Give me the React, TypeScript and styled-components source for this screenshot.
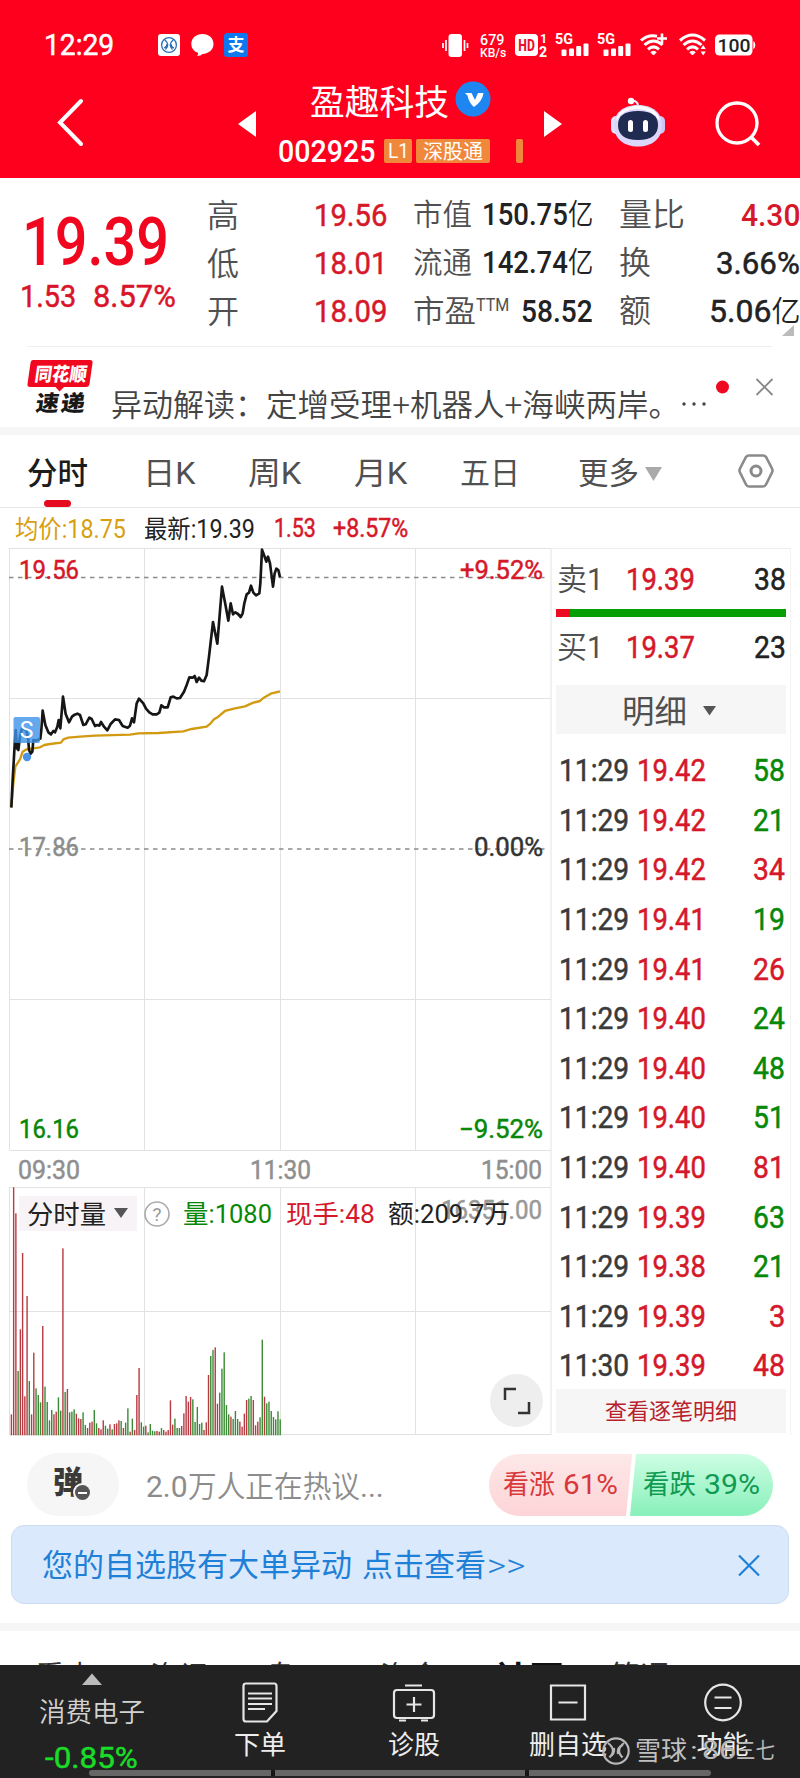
import React, { useLayoutEffect, useRef, useState } from "react";
import styled, { createGlobalStyle } from "styled-components";

const RED = "#d5182a";
const GREEN = "#088808";
const FONT = `Roboto, "Noto Sans CJK SC", sans-serif`;

const GlobalStyle = createGlobalStyle`
  * { box-sizing: border-box; }
  body { margin: 0; background: #fff; font-family: ${FONT}; }
`;

/* ---------- text that is condensed or widened to a given width ---------- */

/* Weight 450 is a regular face thickened by a hairline stroke. */
const FitBox = styled.span<{ $w: number; $size: number; $color: string; $weight: number; $ml: number; $lift: number }>`
  display: inline-block;
  flex: none;
  width: ${(p) => p.$w}px;
  height: ${(p) => Math.round(p.$size * 1.2)}px;
  line-height: ${(p) => Math.round(p.$size * 1.2)}px;
  margin-left: ${(p) => p.$ml}px;
  margin-bottom: ${(p) => p.$lift}px;
  font-size: ${(p) => p.$size}px;
  font-weight: ${(p) => (p.$weight === 450 ? 400 : p.$weight)};
  -webkit-text-stroke: ${(p) => (p.$weight === 450 ? 0.5 : 0)}px ${(p) => p.$color};
  color: ${(p) => p.$color};
`;
const FitInner = styled.span`
  display: inline-block;
  white-space: nowrap;
  transform-origin: 0 50%;
`;

type FitProps = {
  w: number;
  size: number;
  color?: string;
  weight?: number;
  ml?: number;
  lift?: number;
  children: React.ReactNode;
};
function Fit({ w, size, color = "#222", weight = 400, ml = 0, lift = 0, children }: FitProps) {
  const ref = useRef<HTMLSpanElement>(null);
  const [scale, setScale] = useState(1);
  useLayoutEffect(() => {
    if (ref.current) setScale(w / ref.current.offsetWidth);
  }, [w, size, children]);
  return (
    <FitBox $w={w} $size={size} $color={color} $weight={weight} $ml={ml} $lift={lift}>
      <FitInner ref={ref} style={{ transform: `scaleX(${scale})` }}>
        {children}
      </FitInner>
    </FitBox>
  );
}

const Icon = styled.svg<{ $ml?: number }>`
  display: block;
  flex: none;
  margin-left: ${(p) => p.$ml ?? 0}px;
  overflow: visible;
`;

/* ---------- page ---------- */

const Page = styled.main`
  width: 800px;
  height: 1778px;
  overflow: hidden;
  background: #fff;
  display: flex;
  flex-direction: column;
`;
const Header = styled.header`
  flex: none;
  height: 178px;
  background: #fe001e;
`;
const StatusBar = styled.div`
  height: 70px;
  padding: 20px 0 0 44px;
  display: flex;
  align-items: center;
`;
const StatusSpacer = styled.div`
  width: 194px;
`;
const SpeedStack = styled.div`
  margin-left: 11px;
  width: 26px;
  height: 28px;
  display: flex;
  flex-direction: column;
  justify-content: center;
`;
const TitleBar = styled.div`
  height: 108px;
  display: flex;
`;
const NavSlot = styled.div<{ $w: number; $top: number; $left: number }>`
  flex: none;
  width: ${(p) => p.$w}px;
  padding: ${(p) => p.$top}px 0 0 ${(p) => p.$left}px;
`;
const TitleBlock = styled.div`
  width: 268px;
  display: flex;
  flex-direction: column;
`;
const TitleRow = styled.div<{ $h: number; $pl: number }>`
  height: ${(p) => p.$h}px;
  padding-left: ${(p) => p.$pl}px;
  display: flex;
  align-items: center;
`;
const Tag = styled.span<{ $w: number; $ml: number }>`
  width: ${(p) => p.$w}px;
  height: 24px;
  margin-left: ${(p) => p.$ml}px;
  background: #f0883c;
  border-radius: 2px;
  display: flex;
  align-items: center;
  justify-content: center;
`;

/* ---------- quote summary ---------- */

const Quotes = styled.section`
  position: relative;
  flex: none;
  height: 169px;
  display: flex;
  &::after {
    content: "";
    position: absolute;
    left: 27px;
    right: 28px;
    bottom: 0;
    height: 1px;
    background: #eeeeee;
  }
`;
const PriceBlock = styled.div`
  width: 207px;
  padding: 24px 0 0 20px;
  display: flex;
  flex-direction: column;
`;
const ChangeRow = styled.div`
  display: flex;
  margin-top: -5px;
`;
const QuoteColumns = styled.div`
  flex: 1;
  padding: 13px 0 0 0;
  display: flex;
  gap: 26px;
`;
const QuoteColumn = styled.div`
  width: 180px;
  &:last-child { width: 181px; }
`;
const QuoteRow = styled.div`
  height: 48px;
  display: flex;
  align-items: center;
  justify-content: space-between;
`;
const QuoteLabel = styled.span`
  display: flex;
`;
const ExpandCorner = styled.div`
  position: absolute;
  right: 6px;
  bottom: 11px;
  border-left: 12px solid transparent;
  border-bottom: 11px solid #bbb;
`;
const Unit = styled.span`
  font-weight: 350;
  font-size: 29px;
  -webkit-text-stroke: 0;
`;

const News = styled.section`
  flex: none;
  height: 80px;
  padding-left: 27px;
  display: flex;
`;
const NewsText = styled.div`
  padding: 40px 0 0 16px;
  display: flex;
`;
const Band = styled.div`
  flex: none;
  height: 8px;
  background: #f6f6f7;
`;

/* ---------- chart tabs ---------- */

const ChartTabs = styled.nav`
  flex: none;
  height: 73px;
  padding-left: 27px;
  border-bottom: 1px solid #e6e6e6;
  display: flex;
`;
const ChartTab = styled.div<{ $w: number; $pt?: number }>`
  width: ${(p) => p.$w}px;
  padding-top: ${(p) => p.$pt ?? 20}px;
  display: flex;
  flex-direction: column;
`;
const ActiveMark = styled.div`
  width: 27px;
  height: 7px;
  margin: 8px 0 0 17px;
  border-radius: 4px;
  background: #e60a20;
`;
const MoreRow = styled.div`
  display: flex;
  align-items: center;
`;

/* ---------- chart and order book ---------- */

const Market = styled.section`
  flex: none;
  height: 927px;
  display: flex;
`;
const ChartColumn = styled.div`
  position: relative;
  width: 552px;
`;
const Legend = styled.div`
  height: 40px;
  padding: 4px 0 0 15px;
  display: flex;
  align-items: center;
`;
const VolumeLegend = styled.div`
  position: absolute;
  left: 19px;
  top: 688px;
  height: 35px;
  display: flex;
  align-items: center;
`;
const VolumeSelect = styled.div`
  width: 118px;
  height: 35px;
  padding-left: 8px;
  background: #f7f3f6;
  display: flex;
  align-items: center;
`;
const FullscreenButton = styled.div`
  position: absolute;
  left: 490px;
  top: 866px;
  width: 53px;
  height: 53px;
  border-radius: 50%;
  background: #eeeeee;
  display: flex;
  align-items: center;
  justify-content: center;
`;
const Book = styled.div`
  width: 239px;
  margin-top: 40px;
  padding: 0 4px 0 4px;
  border-top: 1px solid #ececec;
  border-right: 1px solid #f3f3f3;
`;
const BestRow = styled.div<{ $h: number; $pt: number }>`
  height: ${(p) => p.$h}px;
  padding: ${(p) => p.$pt}px 0 0 1px;
  display: flex;
`;
const RatioBar = styled.div`
  width: 230px;
  height: 8px;
  background: linear-gradient(90deg, #ee0a20 0 14px, #06a006 14px);
`;
const DetailHeader = styled.div`
  width: 230px;
  height: 49px;
  padding: 2px 0 0 66px;
  background: #f6f6f6;
  display: flex;
  align-items: center;
`;
const Trades = styled.div`
  height: 655px;
  padding-top: 12px;
`;
const TradeRow = styled.div`
  width: 229px;
  height: 49.6px;
  padding-left: 3px;
  display: flex;
  align-items: center;
`;
const TradeQty = styled.div`
  flex: 1;
  display: flex;
  justify-content: flex-end;
`;
const AllTrades = styled.div`
  width: 230px;
  height: 44px;
  padding-top: 1px;
  background: #f6f6f6;
  display: flex;
  align-items: center;
  justify-content: center;
`;

/* ---------- below the chart ---------- */

const Discussion = styled.section`
  flex: none;
  height: 90px;
  padding: 18px 0 0 27px;
  display: flex;
`;
const BulletPill = styled.div`
  position: relative;
  width: 92px;
  height: 63px;
  border-radius: 32px;
  background: #f6f6f6;
  padding: 11px 0 0 26px;
`;
const MinusBadge = styled.span`
  position: absolute;
  left: 48px;
  top: 32px;
  width: 15px;
  height: 15px;
  border-radius: 50%;
  background: #555;
  box-shadow: 0 0 0 2px #f6f6f6;
  &::after {
    content: "";
    position: absolute;
    left: 3px;
    top: 6.5px;
    width: 9px;
    height: 2px;
    background: #fff;
  }
`;
const Hint = styled.div`
  width: 370px;
  padding: 16px 0 0 27px;
  display: flex;
`;
const VotePill = styled.div`
  display: flex;
  width: 284px;
  height: 62px;
  margin-top: 1px;
  border-radius: 31px;
  overflow: hidden;
`;
const VoteHalf = styled.div<{ $up?: boolean }>`
  flex: none;
  width: 144px;
  margin-right: ${(p) => (p.$up ? -4 : 0)}px;
  padding-left: 14px;
  display: flex;
  align-items: center;
  background: ${(p) => (p.$up ? "linear-gradient(#fee8e8, #fdd4d7)" : "linear-gradient(#cdfde3, #88f0ba)")};
  clip-path: ${(p) =>
    p.$up ? "polygon(0 0, 143px 0, 137px 100%, 0 100%)" : "polygon(7px 0, 100% 0, 100% 100%, 1px 100%)"};
`;
const Banner = styled.section`
  flex: none;
  width: 778px;
  height: 79px;
  margin: 0 0 19px 11px;
  padding: 2px 0 0 30px;
  border: 1px solid #cbdcf2;
  border-radius: 13px;
  background: #dbe9fc;
  display: flex;
  align-items: center;
`;
const SectionTabs = styled.nav`
  flex: none;
  height: 34px;
  overflow: hidden;
  padding: 28px 0 0 35px;
  display: flex;
`;

/* ---------- bottom bar ---------- */

const BottomBar = styled.footer`
  position: relative;
  flex: none;
  height: 113px;
  background: #222222;
  display: grid;
  grid-template-columns: 183px 154px 154px 154px 155px;
`;
const BottomItem = styled.div`
  display: flex;
  flex-direction: column;
  align-items: center;
`;
const BottomIcon = styled.div`
  height: 65px;
  padding-top: 17px;
`;
const SectorChange = styled.div`
  margin-top: 12px;
`;
const HomeIndicator = styled.div`
  position: absolute;
  left: 89px;
  top: 105px;
  width: 622px;
  height: 6px;
  border-radius: 3px;
  background: #666;
  &::before,
  &::after {
    content: "";
    position: absolute;
    top: 0;
    width: 4px;
    height: 6px;
    background: #161616;
  }
  &::before { left: 182px; }
  &::after { left: 436px; }
`;
const Watermark = styled.div`
  position: absolute;
  left: 602px;
  top: 71px;
  height: 30px;
  display: flex;
  align-items: center;
`;

/* ---------- data ---------- */

/* Chart points are stored in thirds of a pixel, counted from y = 420. */
const PRICE =
  "34,1163 38,1080 44,975 47,930 51,985 55,990 60,950 66,925 78,930 84,950 87,990 92,1001 97,995 100,960 108,962 121,956 124,930 128,872 136,915 145,937 153,943 160,933 165,937 172,920 176,900 181,925 189,830 197,882 207,907 216,890 224,884 232,881 240,885 250,915 257,913 268,893 275,897 285,918 292,915 298,917 303,906 312,920 322,931 332,912 345,898 357,900 368,918 383,923 390,917 396,895 402,907 410,850 417,836 430,850 438,866 448,877 458,883 470,883 478,878 484,856 492,862 503,862 512,832 520,830 530,835 540,834 552,815 560,795 568,772 578,773 584,768 590,786 597,773 604,782 612,784 620,765 627,710 639,606 652,671 666,500 676,553 685,602 692,550 699,583 706,577 714,582 722,591 728,580 733,550 740,523 747,518 753,497 760,518 768,526 778,520 781,490 786,389 792,405 799,425 804,410 810,430 819,500 824,460 829,446 835,450 840,472";
const AVERAGE =
  "34,1160 40,1090 46,1040 60,1018 68,995 80,988 100,985 120,982 133,975 150,972 183,968 190,958 205,953 240,950 285,947 390,944 415,940 475,939 550,934 575,927 620,920 632,910 642,898 655,890 675,873 705,865 735,859 760,848 780,843 790,834 815,820 840,814";
const VOLUME_TOPS = [
  943, 262, 340, 813, 688, 459, 889, 588, 843, 943, 758, 865, 885, 907, 678, 860, 906, 961, 930, 943, 935, 892, 932,
  445, 876, 867, 937, 935, 928, 941, 955, 957, 937, 975, 984, 968, 965, 930, 970, 984, 988, 961, 977, 986, 973, 988,
  972, 970, 961, 963, 984, 968, 925, 995, 956, 990, 885, 804, 967, 980, 977, 997, 972, 992, 994, 993, 995, 984, 990,
  995, 990, 901, 974, 956, 984, 984, 978, 940, 888, 905, 891, 898, 966, 921, 972, 968, 990, 967, 825, 768, 750, 742,
  911, 878, 806, 757, 915, 943, 950, 957, 933, 957, 965, 980, 941, 900, 896, 888, 900, 976, 965, 952, 719, 890, 910,
  905, 933, 951, 958, 934, 958,
];
/* One letter a minute: r for a rise, g for a fall. */
const VOLUME_SIDES =
  "rrrgrrrrgrrggg" + "rggggrrggrgrgggrrrg" + "grrrggrrrggrgrrrgrg" + "grgrrrggrg" +
  "gggrrgrrrrrgggrrrrrggggg" + "rrrggrrggggg" + "rgggrrrrggrrrggrggggg";

const TRADES: [string, string, string, boolean][] = [
  ["11:29", "19.42", "58", false],
  ["11:29", "19.42", "21", false],
  ["11:29", "19.42", "34", true],
  ["11:29", "19.41", "19", false],
  ["11:29", "19.41", "26", true],
  ["11:29", "19.40", "24", false],
  ["11:29", "19.40", "48", false],
  ["11:29", "19.40", "51", false],
  ["11:29", "19.40", "81", true],
  ["11:29", "19.39", "63", false],
  ["11:29", "19.38", "21", false],
  ["11:29", "19.39", "3", true],
  ["11:30", "19.39", "48", true],
];

/* ---------- parts ---------- */

function Signal({ ml }: { ml: number }) {
  return (
    <Icon $ml={ml} width="34" height="24" viewBox="0 0 34 24" fill="#fff">
      <text x="0" y="11" fontSize="15.5" fontWeight="700" textLength="18" lengthAdjust="spacingAndGlyphs">5G</text>
      <rect x="6.5" y="16.5" width="5" height="6.5" rx="1" />
      <rect x="14" y="15.5" width="5" height="7.5" rx="1" />
      <rect x="21.2" y="13" width="5" height="10" rx="1" />
      <rect x="28.5" y="10.5" width="5" height="12.5" rx="1" />
    </Icon>
  );
}

function Wifi({ ml, plus }: { ml: number; plus?: boolean }) {
  return (
    <Icon $ml={ml} width="27" height="24" viewBox="0 0 27 24" fill="none" stroke="#fff" strokeWidth="3">
      <path d={plus ? "M1 7.5Q8 1.2 17 3.2" : "M1 7.5Q13.5 -3.5 26 7.5"} />
      <path d="M4.5 12Q13.5 4 22.5 12" />
      <path d="M8 16.3Q13.5 11.500 19 16.300" />
      <path d="M10.800 19.200Q13.500 17.200 16.200 19.200L13.500 22Z" fill="#fff" strokeWidth="1" />
      {plus ? (
        <path d="M22 0.500v10M17 5.500h10" strokeWidth="2.600" />
      ) : (
        <path d="M24.200 12l2.600 4h-5.200zM24.200 22.500l2.600-4h-5.200z" fill="#fff" stroke="none" />
      )}
    </Icon>
  );
}

function StatusIcons() {
  return (
    <StatusBar>
      <Fit w={70} size={29} color="#fff" weight={450}>12:29</Fit>
      <Icon $ml={44} width="22" height="22" viewBox="0 0 22 22" fill="none">
        <rect width="22" height="22" rx="3" fill="#fff" />
        <circle cx="11" cy="11" r="7.4" stroke="#2b6fb5" strokeWidth="1.3" />
        <path d="M6.500 5.500q6 5.500 1 10M6 14q3-1 3-4M15.500 5.500q-6 5.500-1 10M16 14q-3-1-3-4" stroke="#2b6fb5" strokeWidth="1.3" />
      </Icon>
      <Icon $ml={11} width="23" height="22" viewBox="0 0 23 22" fill="#fff">
        <path d="M11.500 0C18 0 22.500 4.300 22.500 10S18 19.500 11.500 20Q10 22 6 22Q7.500 20.500 7 18.800Q0.300 16.500 0.300 10C0.300 4.300 5 0 11.500 0Z" />
      </Icon>
      <Icon $ml={10} width="24" height="24" viewBox="0 0 24 24">
        <rect width="24" height="24" rx="3" fill="#0f77f0" />
        <text x="12" y="18" fontSize="17" fontWeight="700" fill="#fff" textAnchor="middle">支</text>
      </Icon>
      <StatusSpacer />
      <Icon width="27" height="23" viewBox="0 0 27 23" fill="none" stroke="#fff" strokeWidth="1.7">
        <rect x="6.500" y="0" width="13.500" height="23" rx="3" fill="#fff" stroke="none" />
        <path d="M1 9v5M4 6v11M22.500 6v11M25.500 9v5" />
      </Icon>
      <SpeedStack>
        <Fit w={24} size={15.5} color="#fff" weight={500} lift={-6}>679</Fit>
        <Fit w={26} size={13.5} color="#fff" weight={500}>KB/s</Fit>
      </SpeedStack>
      <Icon $ml={9} width="32" height="24" viewBox="0 0 32 24" fill="#fff">
        <rect y="1" width="23" height="22" rx="4" />
        <text x="3.300" y="18" fontSize="16" fontWeight="800" fill="#e8102a" textLength="16.500" lengthAdjust="spacingAndGlyphs">HD</text>
        <text x="25" y="9.500" fontSize="12.500" fontWeight="700">1</text>
        <text x="24" y="23.500" fontSize="14" fontWeight="800">2</text>
      </Icon>
      <Signal ml={8} />
      <Signal ml={8} />
      <Wifi ml={9} plus />
      <Wifi ml={12} />
      <Icon $ml={9} width="41" height="22" viewBox="0 0 41 22" fill="#fff">
        <rect y="0.500" width="37.500" height="21" rx="4.500" />
        <path d="M38.300 7q2 1 2 4t-2 4z" />
        <text x="2.500" y="17.500" fontSize="19" fontWeight="500" fill="#222" textLength="33" lengthAdjust="spacingAndGlyphs">100</text>
      </Icon>
    </StatusBar>
  );
}

function Title() {
  return (
    <TitleBar>
      <NavSlot $w={238} $top={29} $left={57}>
        <Icon width="26" height="47" viewBox="0 0 26 47" fill="none" stroke="#fff" strokeWidth="4" strokeLinecap="round">
          <path d="M24 2L3 23.500L24 45" />
        </Icon>
      </NavSlot>
      <NavSlot $w={38} $top={41} $left={0}>
        <Icon width="18" height="26" viewBox="0 0 18 26" fill="#fff">
          <path d="M18 0V26L0 13Z" />
        </Icon>
      </NavSlot>
      <TitleBlock>
        <TitleRow $h={58} $pl={34}>
          <Fit w={139} size={35} color="#fff" lift={-9}>盈趣科技</Fit>
          <Icon $ml={6} width="36" height="36" viewBox="0 0 36 36">
            <circle cx="18" cy="18" r="17.500" fill="#1e86f0" />
            <path d="M10 12h6.500l3.500 7 3-7h5.500q-1 8-9.500 14-5-4-6.500-11.500z" fill="#fff" />
          </Icon>
        </TitleRow>
        <TitleRow $h={46} $pl={2}>
          <Fit w={97} size={31.5} color="#fff" weight={500} lift={-1}>002925</Fit>
          <Tag $w={28} $ml={9}>
            <Fit w={21} size={20} color="#fff">L1</Fit>
          </Tag>
          <Tag $w={74} $ml={4}>
            <Fit w={60} size={20} color="#fff" lift={-1}>深股通</Fit>
          </Tag>
          <Tag $w={7} $ml={26} />
        </TitleRow>
      </TitleBlock>
      <NavSlot $w={67} $top={41} $left={0}>
        <Icon width="18" height="26" viewBox="0 0 18 26" fill="#fff">
          <path d="M0 0V26L18 13Z" />
        </Icon>
      </NavSlot>
      <NavSlot $w={104} $top={27} $left={0}>
        <Icon width="54" height="50" viewBox="0 0 54 50">
          <path d="M27 9Q27 4 21 3.500" stroke="#f2ecff" strokeWidth="2" fill="none" />
          <circle cx="20" cy="4" r="3.200" fill="#fff" />
          <rect x="0" y="19" width="10" height="18" rx="5" fill="#e4e0fb" />
          <rect x="44" y="19" width="10" height="18" rx="5" fill="#cfc4f6" />
          <path d="M27 8C43 8 51 17 51 28C51 42 41 49.500 27 49.500S3 42 3 28C3 17 11 8 27 8Z" fill="#dcd6fa" />
          <path d="M27 9C40 9 48 16 49 24Q40 12 26 12T5 24C6 16 14 9 27 9Z" fill="#fff" />
          <path d="M27 14C41 14 47 19 47 28S41 43 27 43S7 37 7 28S13 14 27 14Z" fill="#1f2b50" />
          <rect x="17" y="23" width="5" height="12" rx="2.500" fill="#fff" />
          <rect x="32" y="23" width="5" height="12" rx="2.500" fill="#fff" />
        </Icon>
      </NavSlot>
      <NavSlot $w={85} $top={31} $left={0}>
        <Icon width="46" height="46" viewBox="0 0 46 46" fill="none" stroke="#fff" strokeWidth="3.300">
          <circle cx="22" cy="22" r="20" />
          <path d="M36.500 36.500L44 44" strokeWidth="3.800" />
        </Icon>
      </NavSlot>
    </TitleBar>
  );
}

function QuoteSummary() {
  const label = "#505050";
  return (
    <Quotes>
      <PriceBlock>
        <Fit w={147} size={67} ml={2} color="#f0061e" weight={500}>19.39</Fit>
        <ChangeRow>
          <Fit w={56} size={32} color="#d9142a" weight={450}>1.53</Fit>
          <Fit w={83} size={32} ml={17} color="#d9142a" weight={450}>8.57%</Fit>
        </ChangeRow>
      </PriceBlock>
      <QuoteColumns>
        <QuoteColumn>
          {[["高", "19.56"], ["低", "18.01"], ["开", "18.09"]].map(([k, v]) => (
            <QuoteRow key={k}>
              <Fit w={32} size={32} color={label} weight={350} lift={-1}>{k}</Fit>
              <Fit w={73} size={32} color={RED} weight={450}>{v}</Fit>
            </QuoteRow>
          ))}
        </QuoteColumn>
        <QuoteColumn>
          <QuoteRow>
            <Fit w={59} size={30} color={label} weight={350}>市值</Fit>
            <Fit w={111} size={31.5} weight={500}>150.75<Unit>亿</Unit></Fit>
          </QuoteRow>
          <QuoteRow>
            <Fit w={59} size={30} color={label} weight={350}>流通</Fit>
            <Fit w={111} size={31.5} weight={500}>142.74<Unit>亿</Unit></Fit>
          </QuoteRow>
          <QuoteRow>
            <QuoteLabel>
              <Fit w={63} size={31} color={label} weight={350}>市盈</Fit>
              <Fit w={33} size={19} color={label}>TTM</Fit>
            </QuoteLabel>
            <Fit w={72} size={32} weight={500}>58.52</Fit>
          </QuoteRow>
        </QuoteColumn>
        <QuoteColumn>
          <QuoteRow>
            <Fit w={66} size={32} color={label} weight={350}>量比</Fit>
            <Fit w={59} size={32} color={RED} weight={500}>4.30</Fit>
          </QuoteRow>
          <QuoteRow>
            <Fit w={32} size={32} color={label} weight={350}>换</Fit>
            <Fit w={84} size={32} weight={450}>3.66%</Fit>
          </QuoteRow>
          <QuoteRow>
            <Fit w={32} size={32} color={label} weight={350}>额</Fit>
            <Fit w={91} size={32} weight={450}>5.06<Unit>亿</Unit></Fit>
          </QuoteRow>
        </QuoteColumn>
      </QuoteColumns>
      <ExpandCorner />
    </Quotes>
  );
}

function NewsLine() {
  return (
    <News>
      <Icon width="68" height="80" viewBox="27 347 68 80">
        <path d="M33 360H90Q93 360 92.500 363L89.500 384Q89 387 86 387H64L59.500 391.500L55.500 387H30Q27 387 27.500 384L30.500 363Q31 360 33 360Z" fill="#f0081e" />
        <g transform="translate(34 381) skewX(-8)">
          <text fontSize="19" fontWeight="900" fill="#fff" textLength="52" lengthAdjust="spacingAndGlyphs">同花顺</text>
        </g>
        <g transform="translate(35 411) skewX(-8)" fill="#181818">
          <text fontSize="22" fontWeight="900" textLength="23" lengthAdjust="spacingAndGlyphs">速</text>
          <text x="25" fontSize="22" fontWeight="900" textLength="24" lengthAdjust="spacingAndGlyphs">递</text>
        </g>
      </Icon>
      <NewsText>
        <Fit w={155} size={31} color="#444" weight={350}>异动解读：</Fit>
        <Fit w={414} size={31} color="#444" weight={350}>定增受理+机器人+海峡两岸。</Fit>
        <Icon $ml={2} width="26" height="38" viewBox="0 0 26 38" fill="#444">
          <circle cx="2" cy="17" r="1.700" />
          <circle cx="12" cy="17" r="1.700" />
          <circle cx="22" cy="17" r="1.700" />
        </Icon>
      </NewsText>
      <Icon $ml={7} width="60" height="60" viewBox="715 347 60 60">
        <circle cx="722.500" cy="387" r="6.500" fill="#ee0a20" />
        <path d="M756.500 379L772.500 395M772.500 379L756.500 395" stroke="#888" strokeWidth="1.800" />
      </Icon>
    </News>
  );
}

function Tabs() {
  const c = "#505050";
  return (
    <ChartTabs>
      <ChartTab $w={116}>
        <Fit w={61} size={31} weight={500} color="#1c1c1c">分时</Fit>
        <ActiveMark />
      </ChartTab>
      <ChartTab $w={105}><Fit w={52} size={31} color={c} weight={370}>日K</Fit></ChartTab>
      <ChartTab $w={106}><Fit w={53} size={31} color={c} weight={370}>周K</Fit></ChartTab>
      <ChartTab $w={106}><Fit w={53} size={31} color={c} weight={370}>月K</Fit></ChartTab>
      <ChartTab $w={118}><Fit w={60} size={31} color={c} weight={370}>五日</Fit></ChartTab>
      <ChartTab $w={160}>
        <MoreRow>
          <Fit w={61} size={31} color={c} weight={370}>更多</Fit>
          <Icon $ml={6} width="17" height="14" viewBox="0 0 17 14"><path d="M0 0H17L8.500 14Z" fill="#aaa" /></Icon>
        </MoreRow>
      </ChartTab>
      <ChartTab $w={40} $pt={19}>
        <Icon width="36" height="34" viewBox="0 0 36 34" fill="none" stroke="#8a8a8a" strokeWidth="2.600">
          <path d="M11 1.500H25Q27 1.500 28 3L34 14.500Q35 16.500 34 18.500L28 30.500Q27 32.500 25 32.500H11Q9 32.500 8 30.500L2 18.500Q1 16.500 2 14.500L8 3Q9 1.500 11 1.500Z" />
          <circle cx="18" cy="17" r="5" strokeWidth="3" />
        </Icon>
      </ChartTab>
    </ChartTabs>
  );
}

type LabelProps = { x: number; y: number; w: number; fill: string; thick?: boolean; children: string };
function Label({ x, y, w, fill, thick = true, children }: LabelProps) {
  return (
    <text
      x={x}
      y={y}
      fontSize={25.5}
      fill={fill}
      stroke={fill}
      strokeWidth={thick ? 0.5 : 0}
      textLength={w}
      lengthAdjust="spacingAndGlyphs"
    >
      {children}
    </text>
  );
}

function Charts() {
  return (
    <Icon width="552" height="887" viewBox="0 548 552 887">
      <g stroke="#e2e2e2" fill="none">
        <path d="M9.500 548.500H551M9.500 698.500H551M9.500 999.500H551M9.500 1150.500H551M9.500 548V1150M144.500 548V1150M280.500 548V1150M415.500 548V1150M551 548V1435" />
        <path d="M9.500 1187.500H551M9.500 1311.500H551M9.500 1434.500H551M9.500 1187V1435M144.500 1187V1435M280.500 1187V1435M415.500 1187V1435" />
      </g>
      <path d="M9 577.500H547M9 849H547" stroke="#8c8c8c" strokeWidth="1.300" strokeDasharray="4.500 4.500" />
      <g transform="translate(0 420) scale(0.33333)" fill="none" strokeLinejoin="round">
        <polyline points={AVERAGE} stroke="#d19a10" strokeWidth="7" />
        <polyline points={PRICE} stroke="#161616" strokeWidth="8" />
      </g>
      <rect x="13.500" y="717" width="26.500" height="26" rx="2" fill="#3d92e8" fillOpacity="0.800" />
      <text x="26.500" y="738" fontSize="23" fill="#fff" textAnchor="middle">S</text>
      <circle cx="27" cy="757" r="4.200" fill="#4a92e8" />

      <Label x={19} y={579} w={60} fill={RED}>19.56</Label>
      <Label x={460} y={579} w={83} fill={RED}>+9.52%</Label>
      <Label x={19} y={855.5} w={60} fill="#8c8c8c">17.86</Label>
      <Label x={474} y={855.5} w={69} fill="#333">0.00%</Label>
      <Label x={19} y={1137.5} w={60} fill={GREEN}>16.16</Label>
      <Label x={459} y={1137.5} w={84} fill={GREEN}>−9.52%</Label>
      <Label x={18} y={1178.5} w={62} fill="#8f8f8f">09:30</Label>
      <Label x={250} y={1178.5} w={61} fill="#8f8f8f">11:30</Label>
      <Label x={481} y={1178.5} w={61} fill="#8f8f8f">15:00</Label>
      <Label x={441} y={1218.5} w={101} fill="#999">16351.00</Label>

      {VOLUME_TOPS.map((top, i) => {
        const y = 1100 + top / 3;
        return (
          <rect
            key={i}
            x={10.7 + i * 2.24}
            y={y}
            width="1.4"
            height={1435.3 - y}
            fill={VOLUME_SIDES[i] === "r" ? "#b83a42" : "#3a8a34"}
          />
        );
      })}
    </Icon>
  );
}

function ChartPanel() {
  return (
    <ChartColumn>
      <Legend>
        <Fit w={111} size={25} color="#d6a012">均价:18.75</Fit>
        <Fit w={111} size={25} ml={18}>最新:19.39</Fit>
        <Fit w={42} size={25} ml={19} color={RED} weight={450} lift={2}>1.53</Fit>
        <Fit w={75} size={25} ml={17} color={RED} weight={450} lift={2}>+8.57%</Fit>
      </Legend>
      <Charts />
      <VolumeLegend>
        <VolumeSelect>
          <Fit w={79} size={26} weight={370} lift={-3}>分时量</Fit>
          <Icon $ml={8} width="14" height="11" viewBox="0 0 14 11"><path d="M0 0H14L7 10Z" fill="#555" /></Icon>
        </VolumeSelect>
        <Icon $ml={7} width="26" height="26" viewBox="0 0 26 26" fill="none">
          <circle cx="13" cy="13" r="12" stroke="#aaa" strokeWidth="1.600" />
          <text x="13" y="20" fontSize="19" fill="#999" textAnchor="middle">?</text>
        </Icon>
        <Fit w={89} size={25.5} ml={13} color={GREEN} lift={-2}>量:1080</Fit>
        <Fit w={89} size={25.5} ml={14} color={RED} lift={-2}>现手:48</Fit>
        <Fit w={122} size={25.5} ml={13} lift={-2}>额:209.7万</Fit>
      </VolumeLegend>
      <FullscreenButton>
        <Icon width="28" height="28" viewBox="0 0 28 28" fill="none" stroke="#333" strokeWidth="2.500">
          <path d="M2 13V2H13M26 15V26H15" />
        </Icon>
      </FullscreenButton>
    </ChartColumn>
  );
}

function OrderBook() {
  const sides: [string, string, string][] = [["卖", "19.39", "38"], ["买", "19.37", "23"]];
  const [ask, bid] = sides.map(([side, price, qty], i) => (
    <BestRow key={side} $h={i ? 68 : 60} $pt={i ? 12 : 12}>
      <Fit w={30} size={31} color="#505050" weight={350}>{side}</Fit>
      <Fit w={16} size={31} color="#505050">1</Fit>
      <Fit w={69} size={31} ml={23} color={RED} weight={450}>{price}</Fit>
      <Fit w={32} size={31} ml={59} weight={450}>{qty}</Fit>
    </BestRow>
  ));
  return (
    <Book>
      {ask}
      <RatioBar />
      {bid}
      <DetailHeader>
        <Fit w={65} size={32} color="#505050" weight={370} lift={-2}>明细</Fit>
        <Icon $ml={16} width="13" height="10" viewBox="0 0 13 10"><path d="M0 0H13L6.500 9.500Z" fill="#555" /></Icon>
      </DetailHeader>
      <Trades>
        {TRADES.map(([time, price, qty, up], i) => (
          <TradeRow key={i}>
            <Fit w={70} size={31} color="#3a3a3a" weight={450}>{time}</Fit>
            <Fit w={69} size={31} ml={8} color={RED} weight={450}>{price}</Fit>
            <TradeQty>
              <Fit w={16 * qty.length} size={31} weight={450} color={up ? RED : GREEN}>{qty}</Fit>
            </TradeQty>
          </TradeRow>
        ))}
      </Trades>
      <AllTrades>
        <Fit w={132} size={22} color="#b8222c" lift={-1}>查看逐笔明细</Fit>
      </AllTrades>
    </Book>
  );
}

function DiscussionRow() {
  return (
    <Discussion>
      <BulletPill>
        <Fit w={30} size={31} color="#3a3a3a" weight={800}>弹</Fit>
        <MinusBadge />
      </BulletPill>
      <Hint>
        <Fit w={42} size={30} color="#8c8c8c">2.0</Fit>
        <Fit w={172} size={30} color="#8c8c8c" weight={350}>万人正在热议</Fit>
        <Fit w={24} size={30} color="#8c8c8c">...</Fit>
      </Hint>
      <VotePill>
        <VoteHalf $up>
          <Fit w={52} size={27} color="#d8383a">看涨</Fit>
          <Fit w={55} size={28} ml={8} color="#d8383a">61%</Fit>
        </VoteHalf>
        <VoteHalf>
          <Fit w={53} size={27} color="#109a52">看跌</Fit>
          <Fit w={56} size={28} ml={8} color="#109a52">39%</Fit>
        </VoteHalf>
      </VotePill>
    </Discussion>
  );
}

function AlertBanner() {
  const blue = "#1f80d8";
  return (
    <Banner>
      <Fit w={310} size={31} color={blue} weight={370}>您的自选股有大单异动</Fit>
      <Fit w={124} size={31} ml={10} color={blue} weight={370}>点击查看</Fit>
      <Fit w={38} size={33} ml={1} color={blue} weight={300}>&gt;&gt;</Fit>
      <Icon $ml={213} width="22" height="22" viewBox="0 0 22 22" fill="none" stroke={blue} strokeWidth="2.2">
        <path d="M1 0.500L21 20.500M21 0.500L1 20.500" />
      </Icon>
    </Banner>
  );
}

function Footer() {
  const stroke = { fill: "none", stroke: "#e6e6e6", strokeWidth: 2.2 };
  return (
    <BottomBar>
      <BottomItem>
        <Icon width="20" height="32" viewBox="0 0 20 32"><path d="M0 20L10 8.500L20 20Z" fill="#bbb" /></Icon>
        <Fit w={106} size={27} color="#d2d2d2" weight={350}>消费电子</Fit>
        <SectorChange>
          <Fit w={93} size={29} color="#19dc28" weight={450}>-0.85%</Fit>
        </SectorChange>
      </BottomItem>
      <BottomItem>
        <BottomIcon>
          <Icon width="36" height="41" viewBox="0 0 36 41" {...stroke}>
            <path d="M4 1.500H32Q34.500 1.500 34.500 4V29L25 39.500H4Q1.500 39.500 1.500 37V4Q1.500 1.500 4 1.500ZM6 11.500H30M6 16.500H30M6 22H30M6 27H23" />
          </Icon>
        </BottomIcon>
        <Fit w={52} size={26} color="#eee" weight={370}>下单</Fit>
      </BottomItem>
      <BottomItem>
        <BottomIcon>
          <Icon width="42" height="40" viewBox="0 0 42 40" {...stroke}>
            <path d="M12 3.500H29M4 8H38Q41 8 41 11V33Q41 36 38 36H4Q1 36 1 33V11Q1 8 4 8ZM21 15V30M13.500 22.500H28.500M6 38.500H13M28 38.500H35" />
          </Icon>
        </BottomIcon>
        <Fit w={52} size={26} color="#eee" weight={370}>诊股</Fit>
      </BottomItem>
      <BottomItem>
        <BottomIcon>
          <Icon width="36" height="40" viewBox="0 0 36 40" {...stroke}>
            <path d="M1 3.500H35V37.500H1ZM8.500 20.500H27.500" />
          </Icon>
        </BottomIcon>
        <Fit w={78} size={26} color="#eee" weight={370}>删自选</Fit>
      </BottomItem>
      <BottomItem>
        <BottomIcon>
          <Icon width="38" height="40" viewBox="0 0 38 40" {...stroke}>
            <circle cx="19" cy="20.500" r="17.800" />
            <path d="M10.500 15.500H27.500M10.500 26H27.500" />
          </Icon>
        </BottomIcon>
        <Fit w={52} size={26} color="#eee" weight={370}>功能</Fit>
      </BottomItem>
      <HomeIndicator />
      <Watermark>
        <Icon width="28" height="28" viewBox="0 0 28 28" fill="none" stroke="#b8b8b8" strokeWidth="2.200">
          <circle cx="14" cy="14" r="12.700" />
          <path d="M6 6Q15 13 7.500 20.500M12 11Q13 18 7 20M22 6Q13 13 20.500 20.500M16 17Q15 10 21 8" />
        </Icon>
        <Fit w={52} size={26} ml={5} color="#c0c0c0">雪球</Fit>
        <Fit w={8} size={24} ml={3} color="#c0c0c0">:</Fit>
        <Fit w={34} size={25} ml={4} color="#b8b8b8">86</Fit>
        <Fit w={39} size={22} ml={0} color="#b8b8b8">三七</Fit>
      </Watermark>
    </BottomBar>
  );
}

export default function App() {
  return (
    <Page>
      <GlobalStyle />
      <Header>
        <StatusIcons />
        <Title />
      </Header>
      <QuoteSummary />
      <NewsLine />
      <Band />
      <Tabs />
      <Market>
        <ChartPanel />
        <OrderBook />
      </Market>
      <DiscussionRow />
      <AlertBanner />
      <Band />
      <SectionTabs>
        <Fit w={60} size={30} color="#333">看点</Fit>
        <Fit w={60} size={30} ml={55} color="#333">资讯</Fit>
        <Fit w={60} size={30} ml={55} color="#333">盘口</Fit>
        <Fit w={60} size={30} ml={55} color="#333">资金</Fit>
        <Fit w={70} size={34} ml={54} color="#111" weight={700}>社区</Fit>
        <Fit w={60} size={30} ml={46} color="#333">简况</Fit>
      </SectionTabs>
      <Footer />
    </Page>
  );
}
